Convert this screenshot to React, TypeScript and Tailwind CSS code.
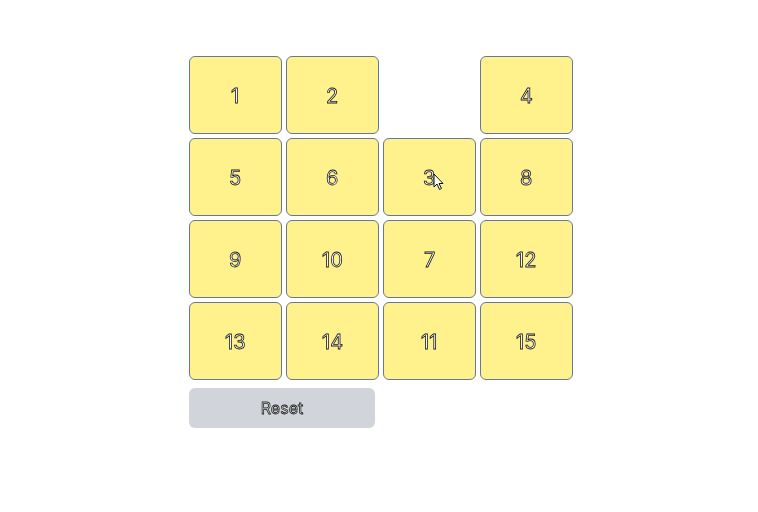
import React from 'react';

const cells: (number | null)[] = [1, 2, null, 4, 5, 6, 3, 8, 9, 10, 7, 12, 13, 14, 11, 15];

const Cursor = () => (
  <svg className="absolute left-[49px] top-[34px]" width="12" height="18" viewBox="0 0 12 18">
    <path d="M1 1 L1 14 L4 11 L6.5 16.5 L8.5 15.5 L6 10.5 L10 10.5 Z" fill="#fff" stroke="#111" strokeWidth="1" />
  </svg>
);

const App = () => {
  return (
    <div className="w-[758px] h-[512px] bg-white font-['Inter',sans-serif]">
      <div className="w-[388px] mx-auto pl-[4px] pt-[56px]">
        <div className="grid grid-cols-[repeat(4,93px)] auto-rows-[78px] gap-[4px]">
          {cells.map((n, i) =>
            n === null ? (
              <div key={i} />
            ) : (
              <div
                key={i}
                className="relative flex items-center justify-center rounded-md border border-[#66789a] bg-[#fff18c] pt-[1px] text-xl"
              >
                <span className="text-white [-webkit-text-stroke:0.8px_#111] will-change-transform opacity-[0.99]">{n}</span>
                {n === 3 && <Cursor />}
              </div>
            )
          )}
        </div>
        <button className="mt-[8px] w-[186px] h-[40px] rounded-md bg-[#d1d5db] text-base">
          <span className="text-white [-webkit-text-stroke:0.8px_#222] will-change-transform opacity-[0.99]">Reset</span>
        </button>
      </div>
    </div>
  );
};

export default App;
